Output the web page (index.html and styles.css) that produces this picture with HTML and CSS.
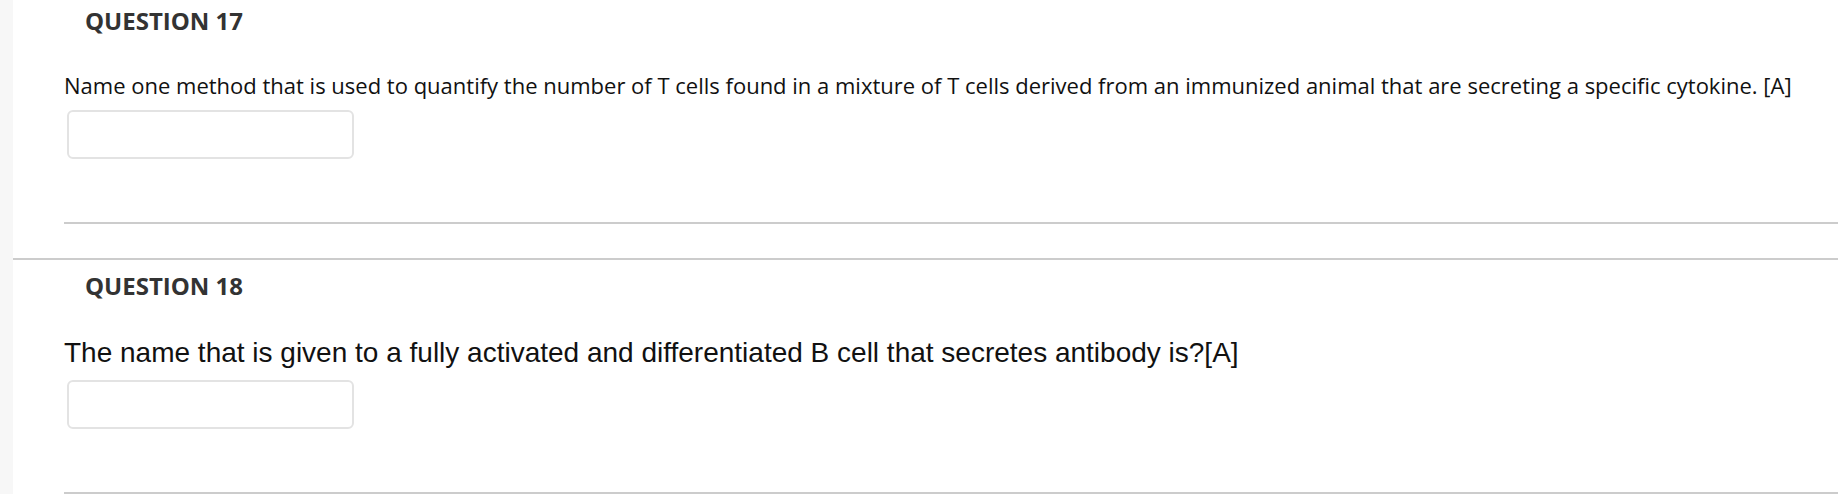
FILE: index.html
```html
<!DOCTYPE html>
<html lang="en">
<head>
<meta charset="utf-8">
<title>Questions</title>
<link rel="stylesheet" href="styles.css">
</head>
<body>
<div class="page">
  <div class="strip"></div>
  <main class="main">
    <section class="question">
      <h3 class="q-title">QUESTION 17</h3>
      <div class="q-body">
        <p class="q-text">Name one method that is used to quantify the number of T cells found in a mixture of T cells derived from an immunized animal that are secreting a specific cytokine. [A]</p>
        <input class="answer" type="text">
      </div>
    </section>
    <section class="question">
      <h3 class="q-title">QUESTION 18</h3>
      <div class="q-body">
        <p class="q-text q-text-arial">The name that is given to a fully activated and differentiated B cell that secretes antibody is?[A]</p>
        <input class="answer" type="text">
      </div>
    </section>
  </main>
</div>
</body>
</html>
```

FILE: styles.css
```css
html, body {
  margin: 0;
  padding: 0;
  background: #ffffff;
  overflow: hidden;
}

.page {
  display: flex;
  min-height: 100vh;
  font-family: "Open Sans", "Liberation Sans", sans-serif;
}

.strip {
  width: 13px;
  flex: 0 0 13px;
  background: #f7f7f7;
}

.main {
  flex: 1;
  margin-top: -5px;
}

.question {
  border-bottom: 2px solid #cccccc;
  padding-top: 10px;
}

.q-title {
  margin: 0 0 0 72px;
  font-size: 24px;
  line-height: 32px;
  font-weight: 700;
  color: #333333;
}

.q-body {
  margin-left: 51px;
  padding-top: 33px;
  padding-bottom: 63px;
  border-bottom: 2px solid #cccccc;
  margin-bottom: 34px;
}

.q-text {
  margin: 0 0 10px 0;
  font-size: 22px;
  line-height: 30px;
  color: #111111;
}

.q-text-arial {
  font-family: "Liberation Sans", Arial, sans-serif;
  font-size: 28px;
  line-height: 35px;
}

.answer {
  display: block;
  box-sizing: border-box;
  margin: 0 0 0 3px;
  width: 287px;
  height: 49px;
  border: 2px solid #e3e3e3;
  border-radius: 6px;
  background: #ffffff;
  outline: none;
}
```
